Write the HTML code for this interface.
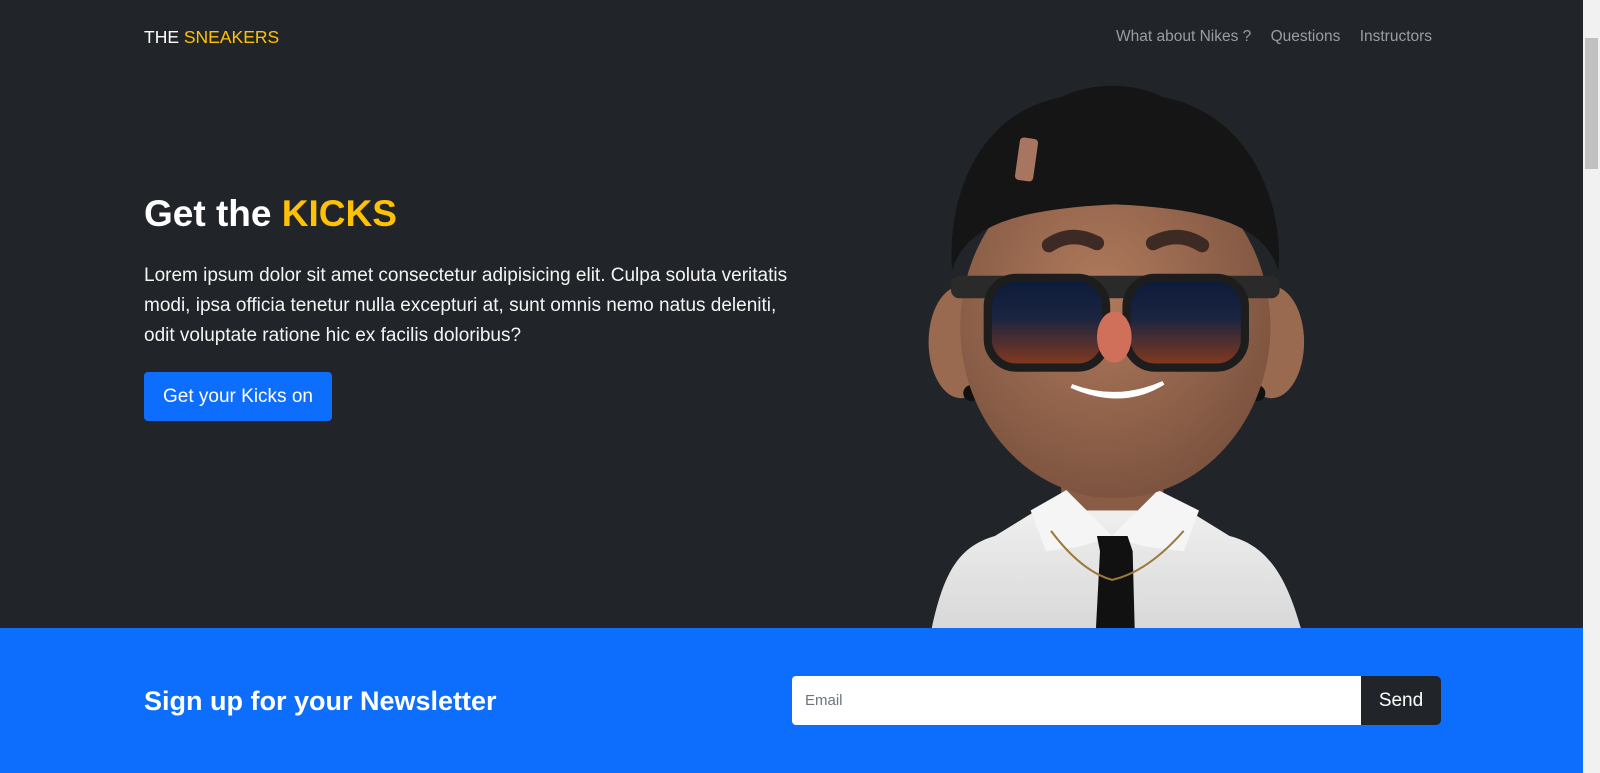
<!DOCTYPE html>
<html><head><meta charset="utf-8"><style>
*{box-sizing:border-box;margin:0;padding:0}
html,body{width:1600px;height:773px;overflow:hidden;background:#212529;font-family:"Liberation Sans",sans-serif}
.page{position:absolute;left:0;top:0;width:1583px;height:773px;background:#212529}
.brand{position:absolute;left:144px;top:27px;font-size:17.5px;color:#fff;white-space:nowrap}
.brand span{color:#ffc107}
.nav{position:absolute;left:1116px;top:28px;font-size:15.5px;color:#9a9da0;white-space:nowrap}
.nav a{margin-right:15px}
h1{position:absolute;left:144px;top:193px;font-size:37px;font-weight:bold;color:#fff;white-space:nowrap}
h1 span{color:#ffc107}
.lead{position:absolute;left:144px;top:261px;font-size:19px;line-height:30px;color:#f4f4f4;white-space:nowrap}
.btn{position:absolute;left:144px;top:372px;width:188px;height:49px;background:#0d6efd;border-radius:4px;color:#fff;font-size:19px;text-align:center;line-height:49px}
.news{position:absolute;left:0;top:628px;width:1583px;height:145px;background:#0d6efd}
.news h3{position:absolute;left:144px;top:58px;font-size:27px;font-weight:bold;color:#fff;white-space:nowrap}
.inp{position:absolute;left:792px;top:48px;width:569px;height:49px;background:#fff;border-radius:4px 0 0 4px;color:#6c757d;font-size:15px;line-height:49px;padding-left:13px}
.send{position:absolute;left:1361px;top:48px;width:80px;height:49px;background:#212529;border-radius:0 5px 5px 0;color:#fff;font-size:19px;line-height:49px;text-align:center}
.sb{position:absolute;left:1583px;top:0;width:17px;height:773px;background:#f1f1f1}
.thumb{position:absolute;left:2px;top:38px;width:13px;height:131px;background:#c1c1c1}
</style></head><body>
<div class="page">
<div class="brand">THE <span>SNEAKERS</span></div>
<div class="nav"><a>What about Nikes ?</a> <a>Questions</a> <a>Instructors</a></div>
<h1>Get the <span>KICKS</span></h1>
<div class="lead">Lorem ipsum dolor sit amet consectetur adipisicing elit. Culpa soluta veritatis<br>modi, ipsa officia tenetur nulla excepturi at, sunt omnis nemo natus deleniti,<br>odit voluptate ratione hic ex facilis doloribus?</div>
<div class="btn">Get your Kicks on</div>
<svg style="position:absolute;left:0;top:0" width="1600" height="773" viewBox="0 0 1568 757">
<defs>
<radialGradient id="sk" cx="0.45" cy="0.4" r="0.6"><stop offset="0" stop-color="#b07a5c"/><stop offset="1" stop-color="#7d5440"/></radialGradient>
<linearGradient id="ln" x1="0" y1="0" x2="0" y2="1"><stop offset="0" stop-color="#0c1a3a"/><stop offset="0.45" stop-color="#1a2440"/><stop offset="1" stop-color="#8a3a1c"/></linearGradient>
<linearGradient id="sh" x1="0" y1="0" x2="0" y2="1"><stop offset="0" stop-color="#f2f2f2"/><stop offset="1" stop-color="#d8d8d8"/></linearGradient>
</defs>
<path d="M913 616 C925 560 940 535 975 525 L1040 485 L1140 485 L1205 525 C1245 535 1262 570 1275 616 Z" fill="url(#sh)"/>
<rect x="1040" y="440" width="100" height="60" fill="#8a5c45"/>
<path d="M1010 500 L1045 480 L1090 525 L1135 480 L1175 500 L1160 540 L1120 535 L1090 525 L1060 535 L1025 540Z" fill="#f5f5f5"/>
<path d="M1075 525 L1105 525 L1110 540 L1112 616 L1074 616 L1078 540Z" fill="#111"/>
<path d="M1030 520 Q1060 560 1090 568 Q1125 560 1160 520" stroke="#9a7a3a" stroke-width="2" fill="none"/>
<ellipse cx="942" cy="335" rx="32" ry="55" fill="#9a6a50"/>
<ellipse cx="1246" cy="335" rx="32" ry="55" fill="#9a6a50"/>
<circle cx="952" cy="385" r="8" fill="#111"/><circle cx="1232" cy="385" r="8" fill="#111"/>
<ellipse cx="1093" cy="320" rx="152" ry="168" fill="url(#sk)"/>
<path d="M933 265 C928 190 960 110 1040 95 C1070 80 1110 80 1140 95 C1220 110 1258 190 1253 265 C1240 225 1200 205 1093 200 C985 205 945 225 933 265Z" fill="#151515"/>
<rect x="997" y="135" width="18" height="42" rx="4" fill="#a77560" transform="rotate(8 1006 156)"/>
<path d="M1028 240 Q1050 225 1075 238" stroke="#3e2a24" stroke-width="14" stroke-linecap="round" fill="none"/>
<path d="M1130 238 Q1155 225 1178 240" stroke="#3e2a24" stroke-width="14" stroke-linecap="round" fill="none"/>
<rect x="932" y="270" width="322" height="22" rx="8" fill="#2a2a2a"/>
<rect x="968" y="272" width="116" height="88" rx="28" fill="url(#ln)" stroke="#1d1d1d" stroke-width="8"/>
<rect x="1104" y="272" width="116" height="88" rx="28" fill="url(#ln)" stroke="#1d1d1d" stroke-width="8"/>
<ellipse cx="1092" cy="330" rx="17" ry="25" fill="#d0705a"/>
<path d="M1050 378 Q1095 395 1140 375 Q1100 400 1050 378Z" fill="#fff" stroke="#fff" stroke-width="4"/>
</svg>
<div class="news"><h3>Sign up for your Newsletter</h3><div class="inp">Email</div><div class="send">Send</div></div>
</div>
<div class="sb"><div class="thumb"></div></div>
</body></html>
